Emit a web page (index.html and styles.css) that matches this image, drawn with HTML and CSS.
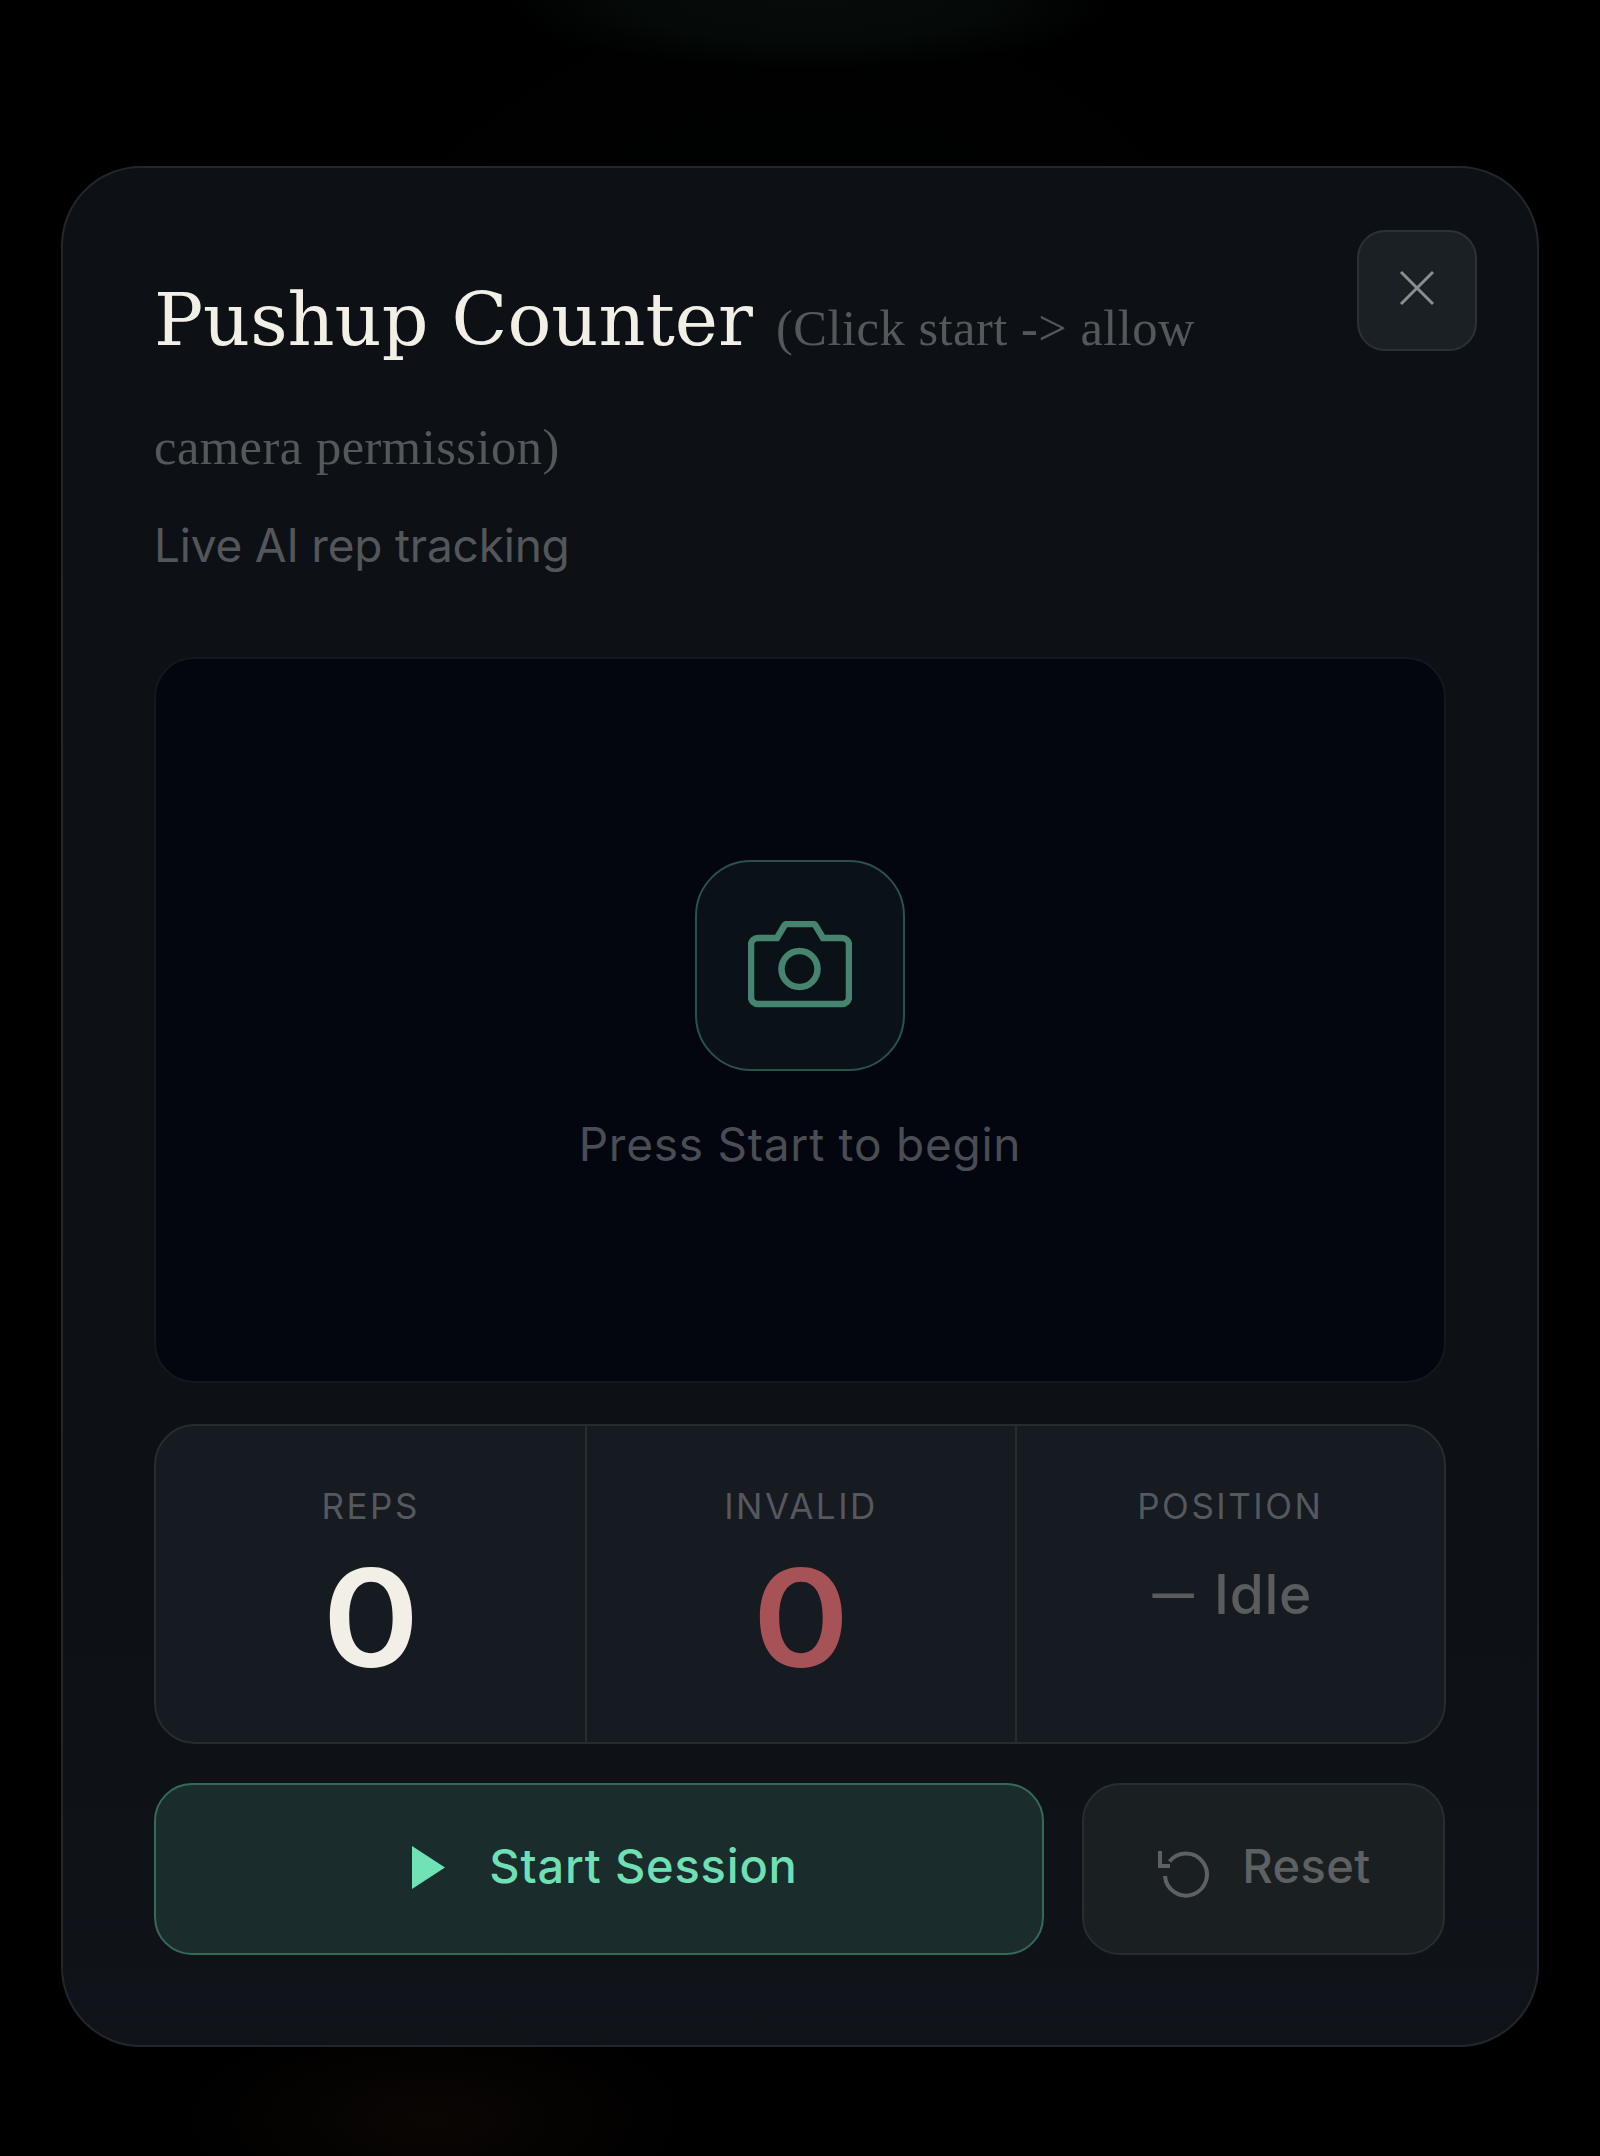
FILE: index.html
```html
<!DOCTYPE html>
<html lang="en">
<head>
<meta charset="utf-8">
<title>Pushup Counter</title>
<link rel="stylesheet" href="styles.css">
</head>
<body>
<main class="backdrop">
  <section class="card">
    <button class="close" aria-label="Close">
      <svg class="close-icon" viewBox="0 0 36 36"><path d="M2 2l32 32M34 2L2 34"/></svg>
    </button>
    <h2 class="title">Pushup Counter <span class="title-note">(Click start -&gt; allow camera permission)</span></h2>
    <p class="subtitle">Live AI rep tracking</p>
    <div class="video">
      <div class="cam-box">
        <svg class="cam-icon" viewBox="0 0 104 88"><path d="M39 3h26a3 3 0 0 1 2.6 1.5L75 17h19a7 7 0 0 1 7 7v52a7 7 0 0 1-7 7H10a7 7 0 0 1-7-7V24a7 7 0 0 1 7-7h19l7.4-12.5A3 3 0 0 1 39 3z"/><circle cx="51.5" cy="48" r="18"/></svg>
      </div>
      <p class="video-text">Press Start to begin</p>
    </div>
    <div class="stats">
      <div class="stat"><span class="stat-label">REPS</span><span class="stat-value">0</span></div>
      <div class="stat"><span class="stat-label">INVALID</span><span class="stat-value invalid">0</span></div>
      <div class="stat"><span class="stat-label">POSITION</span><span class="stat-state"><span class="dash">—</span> Idle</span></div>
    </div>
    <div class="actions">
      <button class="btn start">
        <svg class="play-icon" viewBox="0 0 33 43"><path d="M0 0l33 21.5L0 43z"/></svg>
        <span class="btn-text">Start Session</span>
      </button>
      <button class="btn reset">
        <svg class="reset-icon" viewBox="0 0 54 50"><path d="M13.5 12.5A21 21 0 1 1 9 27"/><path d="M4 2v15h10"/></svg>
        <span class="btn-text">Reset</span>
      </button>
    </div>
  </section>
</main>
</body>
</html>
```
FILE: styles.css
```css
* { box-sizing: border-box; }
html, body { margin: 0; padding: 0; }
body {
  background: #000;
  font-family: Inter, "Liberation Sans", sans-serif;
}
.backdrop {
  width: 1600px;
  height: 2156px;
  padding: 166px 61px 0;
  background:
    radial-gradient(ellipse 300px 70px at 810px 0, #070c0b 0%, #050908 60%, transparent 100%),
    radial-gradient(ellipse 260px 110px at 430px 2120px, #0a0604 0%, transparent 100%),
    radial-gradient(ellipse 800px 1200px at 800px 1000px, #010303 0%, #000 100%);
}
.card {
  position: relative;
  width: 1478px;
  height: 1881px;
  padding: 91px;
  background: linear-gradient(180deg, #0d1116 0%, #0d1116 75%, #10141a 100%);
  border: 2px solid #23272c;
  border-radius: 80px;
}
.close {
  position: absolute;
  top: 62px;
  right: 60px;
  width: 120px;
  height: 121px;
  padding: 0;
  display: flex;
  align-items: center;
  justify-content: center;
  background: #1b2024;
  border: 2px solid #2c3135;
  border-radius: 28px;
}
.close-icon {
  width: 36px;
  height: 36px;
  margin-bottom: 6px;
  fill: none;
  stroke: #8b8e8d;
  stroke-width: 3;
}
.title {
  margin: 0;
  padding: 1px 140px 0 0;
  font-family: "DejaVu Serif", serif;
  font-size: 73px;
  font-weight: 400;
  line-height: 119px;
  color: #f2efe6;
}
.title-note {
  font-family: "Liberation Serif", serif;
  font-size: 50.5px;
  line-height: 1;
  letter-spacing: 0.5px;
  color: #55585a;
}
.subtitle {
  margin: 14px 0 79px;
  font-size: 46px;
  line-height: 66px;
  letter-spacing: -0.2px;
  color: #53575a;
}
.video {
  height: 726px;
  padding-bottom: 4px;
  display: flex;
  flex-direction: column;
  align-items: center;
  justify-content: center;
  background: #03060e;
  border: 2px solid #14181e;
  border-radius: 40px;
}
.cam-box {
  width: 210px;
  height: 211px;
  display: flex;
  align-items: center;
  justify-content: center;
  background: #0a1218;
  border: 2px solid #28524a;
  border-radius: 56px;
}
.cam-icon {
  width: 104px;
  height: 88px;
  fill: none;
  stroke: #47846f;
  stroke-width: 6.5;
}
.video-text {
  margin: 40px 0 0;
  font-size: 46px;
  line-height: 66px;
  letter-spacing: 0.75px;
  color: #4a4d53;
}
.stats {
  display: grid;
  grid-template-columns: repeat(3, 1fr);
  height: 320px;
  margin-top: 41px;
  background: #161a21;
  border: 2.5px solid #282c31;
  border-radius: 41px;
}
.stat {
  display: flex;
  flex-direction: column;
  align-items: center;
  padding-top: 58px;
}
.stat + .stat { border-left: 2.5px solid #282c31; }
.stat-label {
  font-size: 35px;
  line-height: 44px;
  letter-spacing: 2.5px;
  color: #55585c;
}
.stat-value {
  margin-top: 22px;
  font-size: 136px;
  line-height: 136px;
  font-weight: 600;
  color: #f2efe6;
  transform: scaleX(1.08);
}
.stat-value.invalid { color: #a65256; }
.stat-state {
  margin-top: 26px;
  font-size: 55px;
  line-height: 80px;
  font-weight: 500;
  letter-spacing: 0.75px;
  color: #5a5c5e;
}
.dash {
  font-family: Lato, sans-serif;
  font-size: 62px;
  line-height: 1;
}
.actions {
  display: flex;
  gap: 38px;
  margin-top: 39px;
}
.btn {
  height: 172px;
  padding: 0 0 4px;
  display: flex;
  align-items: center;
  justify-content: center;
  font-family: inherit;
  font-size: 47px;
  font-weight: 500;
  border-radius: 38px;
  border: 2.5px solid;
}
.btn-text { margin-bottom: 4px; }
.start {
  width: 890px;
  padding-left: 12px;
  gap: 44px;
  background: #1a2c2b;
  border-color: #356a59;
  color: #6fdfb4;
  letter-spacing: 0.8px;
}
.reset {
  width: 363px;
  gap: 32px;
  background: #1a1f22;
  border-color: #282d31;
  color: #5e6062;
  letter-spacing: 0.4px;
}
.play-icon {
  width: 33px;
  height: 43px;
  fill: #6fe3b6;
}
.reset-icon {
  width: 54px;
  height: 50px;
  margin-top: 14px;
  fill: none;
  stroke: #5e6062;
  stroke-width: 4;
}
```
